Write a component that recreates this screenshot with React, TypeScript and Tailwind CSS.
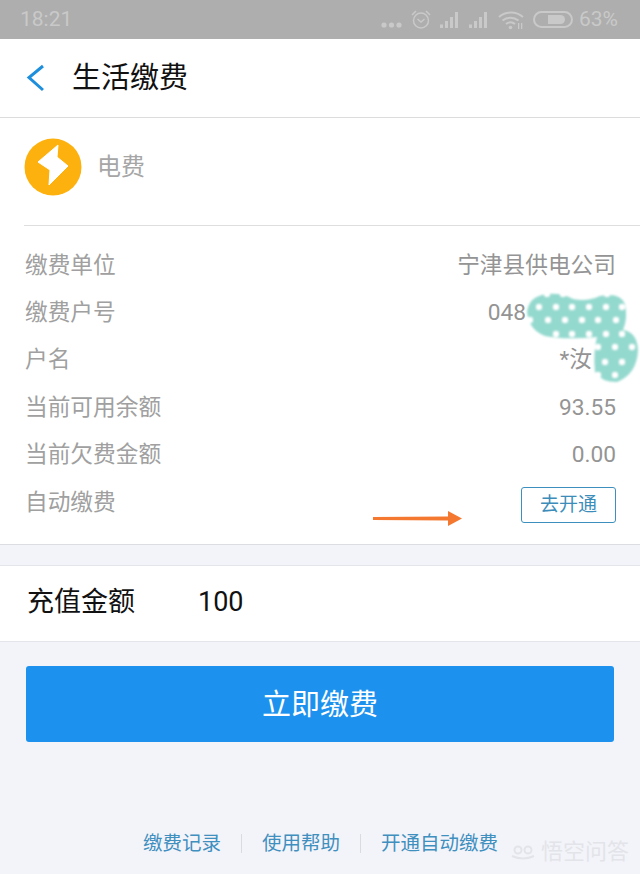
import React from 'react';

const FONT = "font-['Roboto','Noto_Sans_CJK_SC',sans-serif]";

const rows = [
    { label: '缴费单位', value: '宁津县供电公司', valueClass: 'mr-0' },
    { label: '缴费户号', value: '048', valueClass: 'mr-[90px]' },
    { label: '户名', value: '*汝', valueClass: 'mr-[24px]' },
    { label: '当前可用余额', value: '93.55', valueClass: 'mr-0' },
    { label: '当前欠费金额', value: '0.00', valueClass: 'mr-0' },
];

const StatusIcons = () => (
    <svg width="148" height="24" viewBox="0 0 148 24" className="text-[#c9c9c9]" fill="currentColor">
        {/* dots */}
        <circle cx="3" cy="17" r="2.600" />
        <circle cx="10.500" cy="17" r="2.600" />
        <circle cx="18" cy="17" r="2.600" />
        {/* alarm */}
        <circle cx="40" cy="12.500" r="7.500" fill="none" stroke="currentColor" strokeWidth="1.500" />
        <path d="M36.500 11l3.500 3 3.500-3" fill="none" stroke="currentColor" strokeWidth="1.400" />
        <path d="M31 7l4-4M49 7l-4-4" fill="none" stroke="currentColor" strokeWidth="1.600" />
        {/* signal */}
        <path d="M59 16.500h3V20h-3zM64 13h3v7h-3zM69 9h3v11h-3zM74 4h3v16h-3z" />
        <path d="M88 16.500h3V20h-3zM93 13h3v7h-3zM98 9h3v11h-3zM103 4h3v16h-3z" />
        {/* wifi */}
        <path d="M118 9a18 18 0 0 1 24 0M121.500 12.500a13 13 0 0 1 16 0M125 16a7 7 0 0 1 9 0" fill="none" stroke="currentColor" strokeWidth="2" />
        <circle cx="129.500" cy="19.500" r="1.800" />
        <path d="M137 15h1.300v6H137zM140 15h1.300v6H140z" />
    </svg>
);

const BoltBadge = () => (
    <svg width="58" height="58" viewBox="0 0 58 58">
        <circle cx="29" cy="29" r="28.500" fill="#fdb10e" />
        <path d="M34 7 L14 24 L26 32 L25 47 L44 28 L33 19 Z" fill="#ffffff" strokeLinejoin="round" stroke="#ffffff" />
    </svg>
);

// dotted teal smudge over the private digits
const Smudge = ({ path, dots, className }: { path: string; dots: number[][]; className: string }) => (
    <svg viewBox="0 0 115 95" width="115" height="95" className={className}>
        <path d={path} fill="#94d9ce" />
        {dots.map(([x, y]) => (
            <circle key={`${x}-${y}`} cx={x} cy={y} r="3.200" fill="#ffffff" />
        ))}
    </svg>
);

const smudgeDots = [
    [22, 4], [38, 4], [82, 4],
    [14, 17], [31, 17], [47, 17], [64, 17], [81, 17], [97, 17],
    [5, 30], [23, 30], [40, 30], [57, 30], [73, 30], [91, 30],
    [31, 44], [47, 44], [64, 44], [81, 44], [97, 44],
    [73, 57], [90, 57], [107, 57],
    [80, 72], [97, 72],
    [73, 85], [90, 85],
];

const App: React.FC = () => {
    return (
        <div className={`w-[640px] h-[874px] overflow-hidden relative bg-[#f3f4f9] ${FONT}`}>
            <div className="h-[39px] bg-[#aeaeae] flex items-center justify-between pl-[20px] pr-[22px]">
                <span className="text-[21px] text-[#c9c9c9]">18:21</span>
                <div className="flex items-center gap-[6px]">
                    <StatusIcons />
                    <div className="w-[40px] h-[17px] rounded-full border-2 border-[#c9c9c9] py-[2px] -ml-[2px]">
                        <div className="w-[17px] h-full bg-[#c9c9c9] rounded-r-full ml-[13px]" />
                    </div>
                    <span className="text-[21px] text-[#c9c9c9]">63%</span>
                </div>
            </div>

            <div className="h-[79px] bg-white border-b border-[#dcdcdc] flex items-center">
                <svg width="20" height="28" viewBox="0 0 20 28" className="ml-[26px]">
                    <path d="M17 2 L3 13.500 L17 26" fill="none" stroke="#1e8fdc" strokeWidth="3" />
                </svg>
                <h1 className="ml-[26px] text-[29px] font-normal text-[#111111] leading-none">生活缴费</h1>
            </div>

            <div className="bg-white border-b border-[#dcdde2]">
                <div className="h-[108px] ml-[24px] border-b border-[#dedede] flex items-center gap-[15px] pb-[10px]">
                    <BoltBadge />
                    <span className="text-[24px] text-[#a6a6a6]">电费</span>
                </div>
                <div className="relative pt-[16px] h-[318px] pl-[25px] pr-[24px]">
                    {rows.map((r) => (
                        <div key={r.label} className="h-[47.400px] flex items-center justify-between text-[22.700px] text-[#a0a0a0]">
                            <span>{r.label}</span>
                            <span className={`text-[#949494] ${r.valueClass}`}>{r.value}</span>
                        </div>
                    ))}
                    <div className="h-[47.400px] flex items-center text-[22.700px] text-[#a0a0a0]">
                        <span>自动缴费</span>
                    </div>
                    <button className="absolute right-[24px] top-[261px] w-[95px] h-[36px] border-[1.5px] border-[#3d90bd] rounded-[3px] text-[19px] text-[#3d8dba] flex items-center justify-center">
                        去开通
                    </button>
                    {/* orange annotation arrow */}
                    <svg width="92" height="18" viewBox="0 0 92 18" className="absolute left-[372px] top-[284px]">
                        <path d="M1 7 L76 6.500 L76 1 L90 8.500 L76 16 L76 10.500 L1 10 Z" fill="#f4782f" />
                    </svg>
                    <Smudge
                        className="absolute left-[525px] top-[64px] blur-[1px]"
                        dots={smudgeDots}
                        path="M2 22 Q4 6 22 4 Q38 3 48 9 Q62 12 75 6 Q95 2 100 14 Q103 28 98 40 Q112 42 113 60 Q112 84 92 92 Q76 92 70 82 Q68 62 72 47 Q40 50 20 46 Q4 40 2 22 Z"
                    />
                </div>
            </div>

            <div className="mt-[20px] h-[77px] bg-white border-y border-[#e4e5ea] flex items-center pl-[27px] pb-[2px]">
                <span className="text-[27px] text-[#111111] w-[171px]">充值金额</span>
                <span className="text-[27px] text-[#111111]">100</span>
            </div>

            <div className="px-[26px] mt-[24px]">
                <button className="w-full h-[76px] bg-[#1c92ee] rounded-[3px] text-white text-[29px] pt-[4px]">立即缴费</button>
            </div>

            <div className="mt-[87px] flex items-center pl-[143px] text-[19.500px] text-[#3f8fbf]">
                <span>缴费记录</span>
                <div className="w-px h-[19px] bg-[#d9dbe0] mx-[20px]" />
                <span>使用帮助</span>
                <div className="w-px h-[19px] bg-[#d9dbe0] mx-[20px]" />
                <span>开通自动缴费</span>
            </div>

            {/* watermark, bottom corner */}
            <div className="absolute left-[510px] top-[841px] flex items-center gap-[5px] text-[#e3e4e9]">
                <svg width="26" height="16" viewBox="0 0 26 16" fill="none" stroke="currentColor" strokeWidth="2">
                    <circle cx="8" cy="6" r="3.500" />
                    <circle cx="18" cy="6" r="3.500" />
                    <path d="M2 12 Q13 17 24 12" />
                </svg>
                <span className="text-[22px] leading-none">悟空问答</span>
            </div>
        </div>
    );
};

export default App;
